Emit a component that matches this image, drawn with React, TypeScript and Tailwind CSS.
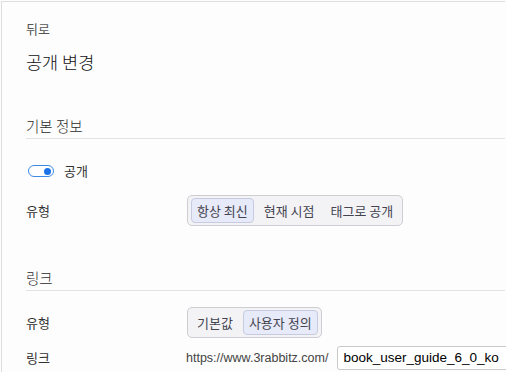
import React from "react";

const font = { fontFamily: '"Noto Sans CJK KR", "Noto Sans", sans-serif' };
const latin = { fontFamily: '"Liberation Sans", Arial, sans-serif' };

function Segmented({ items, active }: { items: string[]; active: number }) {
  return (
    <div className="flex h-[31px] shrink-0 items-stretch gap-[4px] rounded-[5px] border border-[#cdcdd2] bg-[#f3f3f6] px-[3px] py-[2px]">
      {items.map((item, i) => (
        <div
          key={item}
          className={
            i === active
              ? "flex items-center rounded-[4px] border border-[#c6cbe2] bg-[#e7eaf8] px-[5px] text-[13px] text-[#444450]"
              : "flex items-center rounded-[4px] border border-transparent px-[5px] text-[13px] text-[#444450]"
          }
        >
          {item}
        </div>
      ))}
    </div>
  );
}

function SectionHeading({ title }: { title: string }) {
  return (
    <div className="mt-[42px] border-b border-[#e2e2e2] pb-[2px]">
      <div className="h-[20px] text-[14.5px] font-light leading-[20px] text-[#2a2a2a]">{title}</div>
    </div>
  );
}

export default function App() {
  return (
    <div className="h-[372px] w-[506px] overflow-hidden bg-[#fdfdfd]" style={font}>
      <div className="ml-px mt-px h-[380px] w-[504px] border-l border-t border-[#dedede] pl-[24px]">
        <div className="mt-[18px] h-[18px] text-[13px] leading-[18px] text-[#555]">뒤로</div>
        <div className="mt-[12px] h-[24px] text-[17.5px] font-light leading-[24px] text-[#111]">공개 변경</div>

        <SectionHeading title="기본 정보" />

        <div className="mt-[22px] flex h-[20px] items-center">
          <div className="ml-[2px] flex h-[12px] w-[26px] items-center justify-end rounded-full border border-[#3b8ae6] bg-white pr-[2px]">
            <div className="h-[7px] w-[7px] rounded-full bg-[#1a73e8]" />
          </div>
          <span className="ml-[10px] text-[13px] text-[#333]">공개</span>
        </div>

        <div className="mt-[14px] flex items-center">
          <div className="w-[161px] shrink-0 text-[13px] text-[#333]">유형</div>
          <Segmented items={["항상 최신", "현재 시점", "태그로 공개"]} active={0} />
        </div>

        <SectionHeading title="링크" />

        <div className="mt-[16px] flex items-center">
          <div className="w-[161px] shrink-0 text-[13px] text-[#333]">유형</div>
          <Segmented items={["기본값", "사용자 정의"]} active={1} />
        </div>

        <div className="mt-[8px] flex items-center">
          <div className="w-[160px] shrink-0 text-[13px] text-[#333]">링크</div>
          <span className="shrink-0 whitespace-nowrap text-[12.5px] text-[#444]" style={latin}>
            https://www.3rabbitz.com/
          </span>
          <div
            className="ml-[9px] flex h-[24px] w-[220px] shrink-0 items-center rounded-[3px] border border-[#c9c9c9] bg-white pl-[5px] text-[13.5px] text-black"
            style={latin}
          >
            book_user_guide_6_0_ko
          </div>
        </div>
      </div>
    </div>
  );
}
